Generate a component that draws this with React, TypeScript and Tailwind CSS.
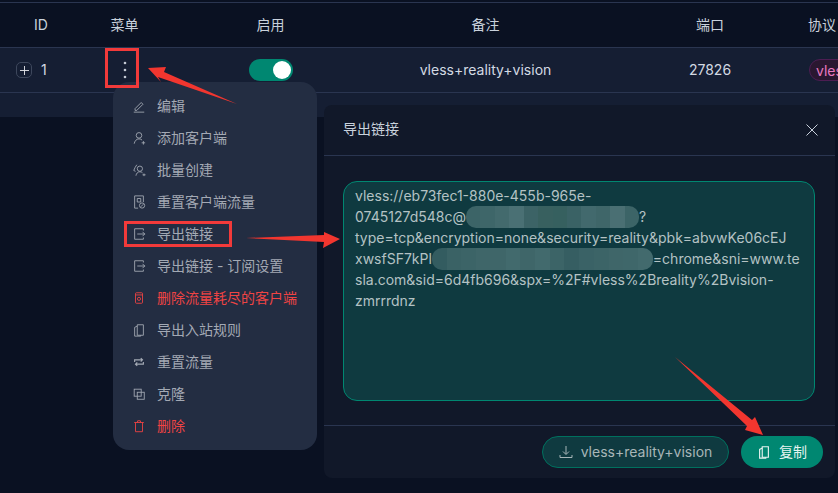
import type { ReactNode } from 'react';

const FONT = 'Inter, "Noto Sans CJK SC", sans-serif';

function Ico({ children, className }: { children: ReactNode; className?: string }) {
  return (
    <svg viewBox="0 0 16 16" fill="none" stroke="currentColor" strokeWidth="1" className={`h-[14px] w-[14px] shrink-0 ${className ?? ''}`}>
      {children}
    </svg>
  );
}

const menuItems: { label: string; danger?: boolean; icon: ReactNode }[] = [
  { label: '编辑', icon: <><path d="M3.500 11l7-7 2 2-7 7h-2z" /><path d="M2 15h12" /></> },
  { label: '添加客户端', icon: <><circle cx="8" cy="5" r="3.200" /><path d="M2.500 14.500c.5-3 2.500-5.500 5.500-5.500 1.500 0 2.700.5 3.500 1.400" /><path d="M11 13.500h4M13 11.500v4" /></> },
  { label: '批量创建', icon: <><circle cx="9" cy="6.500" r="3" /><path d="M4.500 14.500c.4-2.500 2-4.500 4.500-4.500 1.200 0 2.200.5 3 1.200M5.500 2C4 4 3 6 2 8.500l2 1" /><path d="M12 13.500h3.500M13.700 12v3" /></> },
  { label: '重置客户端流量', icon: <><path d="M7 15H3V1h10v7" /><path d="M6 4h4v4H6z" /><circle cx="11.500" cy="12" r="3" /><path d="M10 13.500l3-3" /></> },
  { label: '导出链接', icon: <><path d="M13 4V2H3v12h10v-2" /><path d="M6 8h9M12 5.500L14.500 8 12 10.500" /></> },
  { label: '导出链接 - 订阅设置', icon: <><path d="M13 4V2H3v12h10v-2" /><path d="M6 8h9M12 5.500L14.500 8 12 10.500" /></> },
  { label: '删除流量耗尽的客户端', danger: true, icon: <><rect x="4" y="2" width="8" height="12" rx="1" /><path d="M4 4.500h8" /><circle cx="8" cy="9" r="1.800" /></> },
  { label: '导出入站规则', icon: <><path d="M6 2h7v12H6z" /><path d="M6 3.500L3 5v10h7v-1" /></> },
  { label: '重置流量', icon: <><path d="M3 8V5.500h9M10 3.500l2 2-2 2" strokeWidth="1.300" /><path d="M13 8v2.500H4M6 12.500l-2-2 2-2" strokeWidth="1.300" /></> },
  { label: '克隆', icon: <><rect x="2.500" y="2.500" width="8" height="8" /><rect x="6" y="6" width="8" height="8" /></> },
  { label: '删除', danger: true, icon: <><path d="M2.500 4h11M6 4l.5-2h3l.5 2" /><path d="M4 4v10.500h8V4" /></> },
];

const blur1 = ['#3c6467', '#3e6669', '#436a6d', '#4a7074', '#3c6366', '#38605f', '#36605f', '#3a6265', '#42696d', '#3f6669', '#4a6f73', '#3c6467'];
const blur2 = ['#335c60', '#3a6265', '#3c6467', '#3f6669', '#3f6669', '#426a6d', '#3f6669', '#426a6d', '#3c6467', '#365e62', '#3a6266', '#3c6467', '#3f6669', '#3f676a', '#426a6d'];

// blurred address in the link text
function Blur({ colors, className }: { colors: string[]; className: string }) {
  return (
    <span className={`-my-[1px] inline-flex h-[22px] overflow-hidden rounded-[10px] align-[-6px] ${className}`}>
      {colors.map((c, i) => (
        <span key={i} className="h-full flex-1" style={{ backgroundColor: c }} />
      ))}
    </span>
  );
}

const cols = 'grid-cols-[82px_85px_207px_223px_211px_30px]';

export default function App() {
  return (
    <div className="relative h-[493px] w-[838px] overflow-hidden bg-[#0a1122] text-[14px]" style={{ fontFamily: FONT }}>
      <div className="mt-[2px] border-t border-[#2a3550]">
        <div className={`grid h-[44px] ${cols} items-center pb-[2px] text-center text-[#c9d1dc]`}>
          <span>ID</span>
          <span>菜单</span>
          <span>启用</span>
          <span>备注</span>
          <span className="pl-[15px]">端口</span>
          <span className="whitespace-nowrap text-left">协议</span>
        </div>
        <div className={`grid h-[46px] ${cols} items-center border-y border-[#2a3550] bg-[#151e33] text-center text-[#d3dae3]`}>
          <div className="flex items-center gap-[9px] pl-[16px]">
            <span className="flex h-[16px] w-[16px] items-center justify-center rounded-[5px] border border-[#3d475c] text-[#e5e7eb]">
              <svg viewBox="0 0 10 10" className="h-[9px] w-[9px]" stroke="currentColor"><path d="M0 5h10M5 0v10" /></svg>
            </span>
            <span className="pb-[2px]">1</span>
          </div>
          <div className="flex justify-center">
            <svg viewBox="0 0 4 20" className="h-[20px] w-[4px]" fill="#c4cad4"><circle cx="2" cy="3" r="1.300" /><circle cx="2" cy="10" r="1.300" /><circle cx="2" cy="17" r="1.300" /></svg>
          </div>
          <div className="flex justify-center">
            <span className="flex h-[22px] w-[44px] items-center justify-end rounded-full bg-[#008771] pr-[2px]">
              <span className="h-[18px] w-[18px] rounded-full bg-white" />
            </span>
          </div>
          <span className="pb-[2px]">vless+reality+vision</span>
          <span className="pb-[2px] pl-[15px]">27826</span>
          <span className="ml-[1px] flex h-[22px] w-[60px] items-center rounded-full border border-[#4c1d52] bg-[#2a1730] pl-[6px] text-[#e879c0]">vless</span>
        </div>
        <div className="h-[24px] bg-[#151e33]" />
      </div>

      {/* action menu */}
      <div className="absolute left-[113px] top-[82px] flex w-[204px] flex-col rounded-[16px] bg-[#232d42] py-[8px]">
        {menuItems.map((item) => (
          <div key={item.label} className={`flex h-[32px] items-center gap-[11px] pl-[19px] ${item.danger ? 'text-[#ef4444]' : 'text-[#a3a9b4]'}`}>
            <Ico>{item.icon}</Ico>
            <span className="pb-[2px]">{item.label}</span>
          </div>
        ))}
      </div>

      {/* export dialog */}
      <div className="absolute left-[324px] top-[105px] flex h-[373px] w-[511px] flex-col rounded-[8px] bg-[#111829]">
        <div className="flex h-[51px] shrink-0 items-center justify-between border-b border-[#2a3550] pl-[19px] pr-[17px]">
          <span className="pb-[3px] text-[#c9d1dc]">导出链接</span>
          <svg viewBox="0 0 12 12" className="h-[12px] w-[12px]" stroke="#c9d1dc"><path d="M.5.500l11 11M11.500.500l-11 11" /></svg>
        </div>
        <div className="flex-1 px-[19px] pt-[25px]">
          <div className="h-[220px] w-[472px] whitespace-nowrap rounded-[14px] border border-[#008771] bg-[#0f3a40] px-[11px] py-[3px] leading-[21px] text-[#b4c2c4]">
            <div>vless://eb73fec1-880e-455b-965e-</div>
            <div>0745127d548c@<Blur colors={blur1} className="w-[173px]" />?</div>
            <div>type=tcp&amp;encryption=none&amp;security=reality&amp;pbk=abvwKe06cEJ</div>
            <div>xwsfSF7kPl<Blur colors={blur2} className="w-[221px]" />=chrome&amp;sni=www.te</div>
            <div>sla.com&amp;sid=6d4fb696&amp;spx=%2F#vless%2Breality%2Bvision-</div>
            <div>zmrrrdnz</div>
          </div>
        </div>
        <div className="flex h-[53px] shrink-0 items-center justify-end gap-[12px] border-t border-[#2a3550] pr-[12px]">
          <span className="flex h-[32px] w-[187px] items-center justify-center gap-[8px] rounded-full border border-[#00705e] bg-[#0f3a40] pb-[1px] text-[#a8b6b8]">
            <svg viewBox="0 0 14 14" className="h-[14px] w-[14px]" fill="none" stroke="currentColor"><path d="M7 1v8M4 6.500L7 9.500l3-3M1 10v2.500h12V10" /></svg>
            vless+reality+vision
          </span>
          <span className="flex h-[32px] w-[82px] items-center justify-center gap-[8px] rounded-full bg-[#008771] pb-[1px] text-[#e6f3f0]">
            <Ico><path d="M6 2h7v12H6z" strokeWidth="1.300" /><path d="M6 3.500L3 5v10h7v-1" strokeWidth="1.300" /></Ico>
            复制
          </span>
        </div>
      </div>

      {/* red markup drawn over the screenshot */}
      <div className="absolute left-[105px] top-[48px] h-[40px] w-[34px] border-[3px] border-[#f23a3a]" />
      <div className="absolute left-[124px] top-[221px] h-[26px] w-[108px] border-[3px] border-[#f23a3a]" />
      <svg className="absolute left-0 top-0" width="838" height="493" fill="#f2362f">
        <polygon points="148,68 166,67 164,72 237,104 158,77 161,82" />
        <polygon points="246,238 324,235 324,232 340,239 323,248 324,242" />
        <polygon points="675,357 752,420 755,417 763,435 745,430 747,426" />
      </svg>
    </div>
  );
}
